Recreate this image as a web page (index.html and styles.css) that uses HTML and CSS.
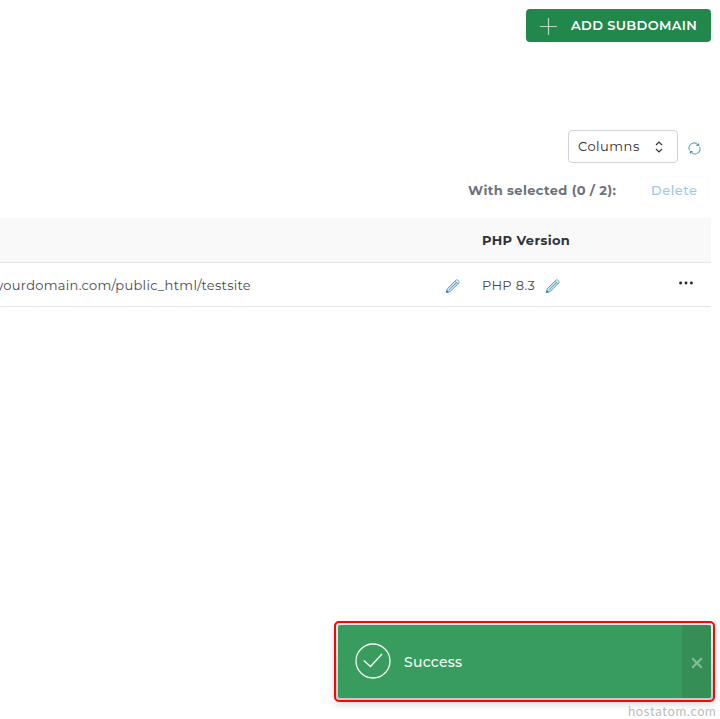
FILE: index.html
```html
<!DOCTYPE html>
<html lang="en">
<head>
<meta charset="utf-8">
<title>Subdomains</title>
<link rel="stylesheet" href="styles.css">
</head>
<body>
<svg class="defs" width="0" height="0">
  <symbol id="pencil" viewBox="0 0 16 16">
    <path d="M1.5 14.5 2.5 10.5 10.8 2.2 13.8 5.2 5.5 13.5Z" fill="#c5e0eb"/>
    <path d="M1.3 14.5 2.3 10.7 10.8 2.2Q11.8 1.3 12.8 2.1L13.7 3Q14.6 4 13.8 5L5.3 13.5ZM10 3.2 12.8 6M4.3 11.7 11.2 4.8" fill="none" stroke="#62a6c5" stroke-width="1"/>
    <path d="m1 14.8.7-2.7 2.1 2.1Z" fill="#247ba5"/>
  </symbol>
</svg>
<main class="page">
  <header class="actions">
    <button class="add">
      <svg width="17" height="17" viewBox="0 0 17 17"><path d="M8.5 0v17M0 8.5h17" stroke="#b9d9c4" stroke-width="1.2"/></svg>
      <span class="add-label">ADD SUBDOMAIN</span>
    </button>
  </header>
  <div class="toolbar">
    <button class="columns">
      <span class="columns-label">Columns</span>
      <svg width="8" height="12" viewBox="0 0 8 12"><path d="M1 4 4 1l3 3M1 8l3 3 3-3" fill="none" stroke="#30333b" stroke-width="1.2"/></svg>
    </button>
    <svg class="refresh" width="13" height="13" viewBox="0 0 13 13"><g fill="none" stroke="#65a9c7" stroke-width="1.1"><path d="M1.5 8.2A5 5 0 0 1 9.8 2.8M11.5 4.8A5 5 0 0 1 3.2 10.2"/><path d="M8.5 3.5h2.1V1.5M4.5 9.5H2.4v2" stroke="#408fb4"/></g></svg>
  </div>
  <div class="selection">
    <span class="selected-label">With selected (0 / 2):</span>
    <button class="delete"><span class="delete-label">Delete</span></button>
  </div>
  <section class="table">
    <div class="row head"><span></span><strong class="version-title">PHP Version</strong></div>
    <div class="row">
      <div class="path-cell"><div class="path-clip"><span class="path">yourdomain.com/public_html/testsite</span></div><svg class="pencil" width="16" height="16"><use href="#pencil"/></svg></div>
      <div class="version"><span class="php">PHP 8.3</span><svg class="pencil" width="16" height="16"><use href="#pencil"/></svg></div>
      <svg class="more" width="14" height="4" viewBox="0 0 14 4"><g fill="#25282f"><circle cx="1.6" cy="2" r="1.45"/><circle cx="7" cy="2" r="1.45"/><circle cx="12.4" cy="2" r="1.45"/></g></svg>
    </div>
  </section>
  <aside class="outline">
    <div class="toast">
      <svg class="check" width="36" height="36" viewBox="0 0 36 36" fill="none" stroke="#f5faf6" stroke-width="1.3"><circle cx="18" cy="18" r="17"/><path d="m8.8 17.5 6.7 6L27 11"/></svg>
      <span class="success">Success</span>
      <button class="close" aria-label="Close"><svg width="12" height="12" viewBox="0 0 12 12"><path d="m1.2 1.2 9.6 9.6m0-9.6-9.6 9.6" stroke="#85bb98" stroke-width="2.2"/></svg></button>
    </div>
  </aside>
  <footer><span class="brand">hostatom.com</span></footer>
</main>
</body>
</html>
```

FILE: styles.css
```css
* { box-sizing: border-box; }
body { margin: 0; background: #fff; font-family: Montserrat, Inter, sans-serif; font-size: 13px; color: #454950; }
button { font: inherit; padding: 0; border: 0; background: none; }
svg { display: block; flex: none; }
.defs { position: absolute; }
span, strong { white-space: nowrap; }
.page { width: 720px; height: 719px; overflow: hidden; display: flex; flex-direction: column; padding-top: 9px; }
.actions { height: 121px; padding-right: 9px; display: flex; justify-content: flex-end; align-items: flex-start; }
.add { width: 185px; height: 33px; border-radius: 4px; background: #21874b; color: #fff; display: flex; align-items: center; padding: 0 0 0 14px; gap: 14px; font-weight: 600; }
.add svg { margin-top: 2px; }
.add-label { letter-spacing: .35px; margin-bottom: 2px; }
.toolbar { height: 33px; display: flex; align-items: center; padding-left: 568px; }
.columns { width: 110px; height: 33px; border: 1px solid #d1d3dc; border-radius: 4px; display: flex; align-items: center; justify-content: space-between; padding: 0 14px 0 9px; color: #292d35; }
.columns-label { letter-spacing: .5px; margin-bottom: 2px; }
.refresh { margin: 4px 0 0 10px; }
.selection { height: 55px; display: flex; align-items: center; padding: 0 0 1px 468px; }
.selected-label { width: 172px; font-weight: 700; color: #6c717a; letter-spacing: .36px; margin-bottom: 1px; }
.delete { width: 68px; height: 29px; text-align: left; padding: 0 0 1px 10px; border: 1px solid #fcfcfc; border-radius: 4px; color: #9bcbe1; font-weight: 500; }
.delete-label { letter-spacing: .5px; }
.table { width: 711px; }
.row { height: 44px; border-bottom: 1px solid #e5e5e9; display: grid; grid-template-columns: 482px 197px 1fr; align-items: center; }
.head { height: 45px; background: #f9f9f9; color: #2f3339; }
.version-title { letter-spacing: .36px; }
.path-cell { display: flex; align-items: center; }
.path-clip { width: 251px; margin-right: 194px; overflow: hidden; display: flex; justify-content: flex-end; }
.path { letter-spacing: .3px; }
.version { display: flex; align-items: center; }
.php { width: 63px; letter-spacing: .3px; }
.pencil { margin-top: 2px; }
.more { margin-bottom: 4px; }
.outline { margin: auto 5px 0 334px; width: 381px; height: 81px; border: 2px solid #f80505; border-radius: 5px; padding: 2px; background: linear-gradient(#eee, #c9c9c9); box-shadow: 0 3px 7px #0002; }
.toast { height: 73px; width: 373px; border-radius: 2px; overflow: hidden; background: #389c5f; display: flex; align-items: center; padding-left: 17px; }
.check { margin-bottom: 1px; }
.success { color: #f5faf6; font-size: 14px; font-weight: 500; margin-left: 13px; letter-spacing: .25px; }
.close { width: 29px; height: 73px; margin-left: auto; display: flex; align-items: center; justify-content: center; background: #348e56; }
.close svg { margin-top: 2px; }
footer { height: 17px; padding-left: 628px; line-height: 18px; }
.brand { color: #bcbcbc; font-family: Lato, sans-serif; font-size: 13px; letter-spacing: .6px; }
```
